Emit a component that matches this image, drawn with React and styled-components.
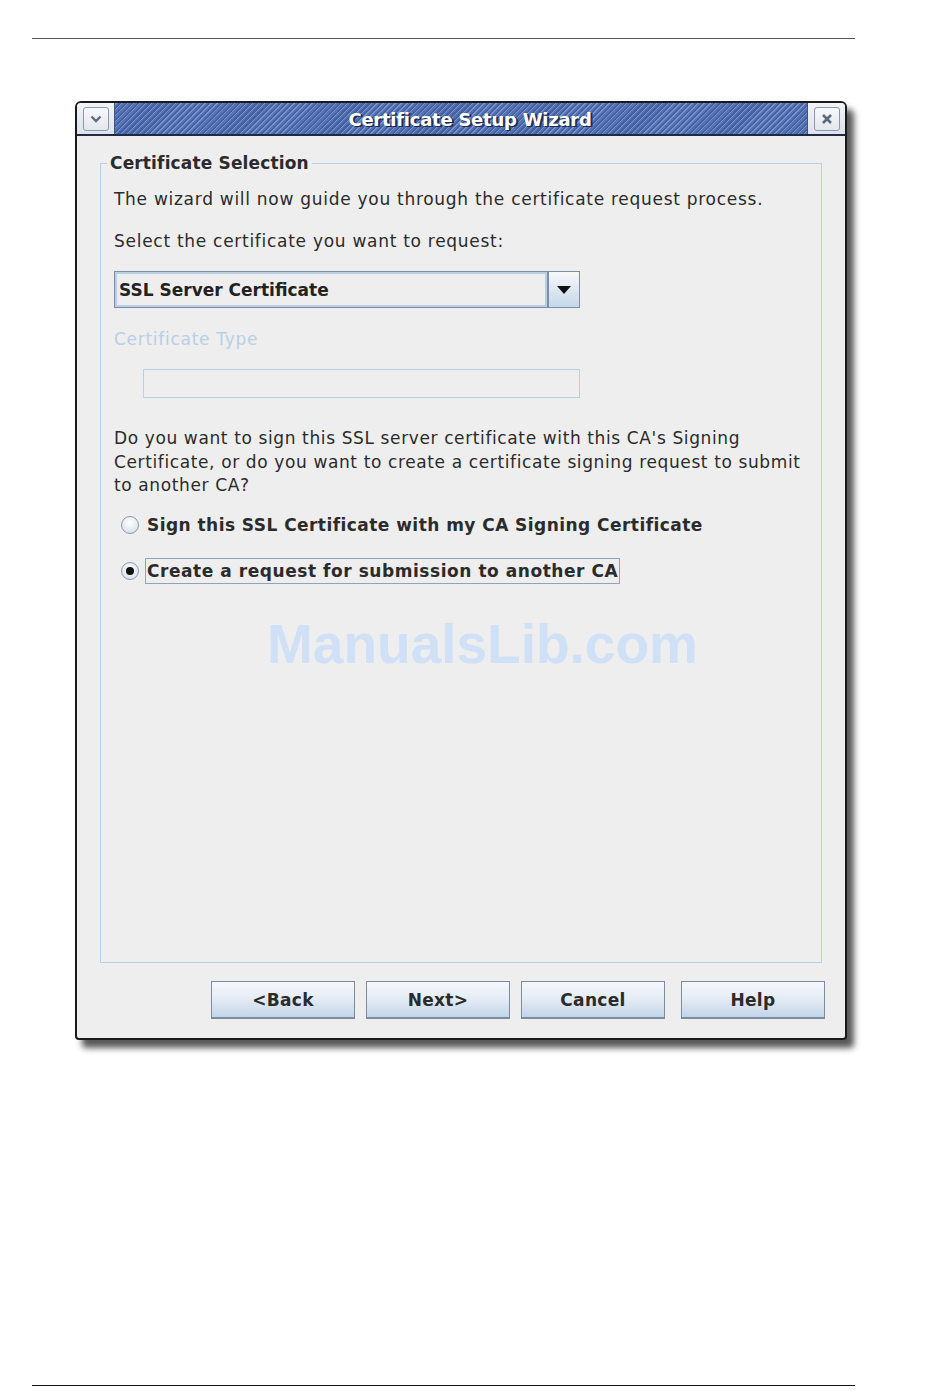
import React from "react";
import styled, { createGlobalStyle } from "styled-components";

const Global = createGlobalStyle`
  html, body {
    margin: 0;
    background: #ffffff;
  }
  body {
    font-family: "DejaVu Sans", "Liberation Sans", sans-serif;
  }
`;

const Page = styled.div`
  width: 823px;
  padding: 38px 0 0 32px;
  height: 1348px;
  display: flex;
  flex-direction: column;
`;

const Rule = styled.div`
  height: 0;
  border-top: 1px solid ${(p) => p.color || "#555"};
`;

const Window = styled.div`
  margin: 62px 0 0 43px;
  width: 772px;
  height: 939px;
  box-sizing: border-box;
  border: 2px solid #1a1a1a;
  border-radius: 6px 6px 4px 4px;
  background: #eeeeee;
  box-shadow: 7px 8px 6px rgba(0, 0, 0, 0.65);
  display: flex;
  flex-direction: column;
  overflow: hidden;
`;

const TitleBar = styled.div`
  height: 31px;
  flex-shrink: 0;
  display: flex;
  border-bottom: 2px solid #1f2a45;
`;

const TitleSide = styled.div`
  width: 37px;
  display: flex;
  align-items: center;
  justify-content: center;
  background: linear-gradient(#f1f3f7, #dde3ec);
  border-${(p) => (p.right ? "left" : "right")}: 1px solid #3d5488;
`;

const TitleButton = styled.div`
  width: 26px;
  height: 24px;
  box-sizing: border-box;
  border: 1px solid #8e97a8;
  border-radius: 3px;
  background: linear-gradient(#f7f8fb, #e3e7ee);
  display: flex;
  align-items: center;
  justify-content: center;
`;

const TitleStripes = styled.div`
  flex: 1;
  display: flex;
  align-items: center;
  justify-content: center;
  padding-left: 18px;
  background: repeating-linear-gradient(
    -45deg,
    #5473b4 0px,
    #5473b4 1.6px,
    #7792cc 1.6px,
    #7792cc 2.6px,
    #44609f 2.6px,
    #44609f 4.2px
  );
  color: #ffffff;
  font-weight: bold;
  font-size: 18px;
  letter-spacing: -0.25px;
  text-shadow: 1px 1px 0 #1f2c4d, 2px 1px 0 #1f2c4d;
  padding-top: 2px;
`;

const Body = styled.div`
  flex: 1;
  display: flex;
  flex-direction: column;
  padding: 27px 23px 20px 23px;
`;

const Group = styled.div`
  position: relative;
  height: 800px;
  flex-shrink: 0;
  box-sizing: border-box;
  border: 1px solid #b8cfe5;
  padding: 23px 10px 0 13px;
  display: flex;
  flex-direction: column;
`;

const Legend = styled.div`
  position: absolute;
  top: -12px;
  left: 6px;
  padding: 0 3px;
  background: #eeeeee;
  font-weight: bold;
  font-size: 17px;
  letter-spacing: 0.15px;
  line-height: 22px;
  color: #2b2b2b;
`;

const Text = styled.div`
  font-size: 17px;
  line-height: ${(p) => p.lh || 24}px;
  letter-spacing: ${(p) => p.ls ?? 0.72}px;
  white-space: nowrap;
  color: ${(p) => (p.disabled ? "#b9cfe6" : "#2b2b2b")};
  margin-top: ${(p) => p.mt || 0}px;
`;

const Combo = styled.div`
  margin-top: 18px;
  width: 466px;
  height: 37px;
  box-sizing: border-box;
  border: 1px solid #7d8ea6;
  display: flex;
`;

const ComboField = styled.div`
  flex: 1;
  border: 2px solid #b8cfe5;
  background: #eeeeee;
  display: flex;
  align-items: center;
  padding-left: 2px;
  font-weight: bold;
  font-size: 17px;
  letter-spacing: 0;
  color: #222;
`;

const ComboArrow = styled.div`
  width: 30px;
  border-left: 2px solid #7d8ea6;
  background: linear-gradient(#f6f8fb, #c6d7ea);
  display: flex;
  align-items: center;
  justify-content: center;
`;

const DisabledField = styled.div`
  margin: 18px 0 0 29px;
  width: 437px;
  height: 29px;
  box-sizing: border-box;
  border: 1px solid #b8cfe5;
`;

const RadioRow = styled.div`
  margin-top: ${(p) => p.mt}px;
  display: flex;
  align-items: center;
  gap: 6px;
  margin-left: 7px;
  height: 26px;
`;

const RadioDot = styled.div`
  width: 18px;
  height: 18px;
  box-sizing: border-box;
  border-radius: 50%;
  border: 1px solid #8a9bb3;
  background: radial-gradient(circle at 50% 35%, #ffffff, #d0dbe9);
  display: flex;
  align-items: center;
  justify-content: center;
  &::after {
    content: "";
    display: ${(p) => (p.checked ? "block" : "none")};
    width: 8px;
    height: 8px;
    border-radius: 50%;
    background: #111;
  }
`;

const RadioLabel = styled.div`
  font-weight: bold;
  font-size: 17px;
  letter-spacing: ${(p) => (p.focused ? 0.55 : 0.45)}px;
  color: #2b2b2b;
  line-height: 24px;
  padding: 0 1px;
  border: 1px solid ${(p) => (p.focused ? "#8ea3bd" : "transparent")};
`;

const Watermark = styled.div`
  margin-top: 30px;
  align-self: center;
  margin-left: 40px;
  font-family: "Liberation Sans", Arial, sans-serif;
  font-weight: bold;
  font-size: 55px;
  line-height: 60px;
  color: #cfe0f7;
`;

const ButtonRow = styled.div`
  margin: 18px -3px 0 0;
  display: flex;
  justify-content: flex-end;
  gap: 11px;
`;

const Button = styled.div`
  width: 144px;
  height: 38px;
  box-sizing: border-box;
  border: 1px solid #7b8ba2;
  border-bottom-width: 2px;
  background: linear-gradient(#f5f7fa, #e6edf5 45%, #c3d5ea);
  display: flex;
  align-items: center;
  justify-content: center;
  margin-left: ${(p) => p.extra || 0}px;
  font-weight: bold;
  font-size: 17px;
  letter-spacing: 0.3px;
  color: #2b2b2b;
`;

const Spacer = styled.div`
  flex: 1;
`;

export default function App() {
  return (
    <>
      <Global />
      <Page>
        <Rule color="#555" />
        <Window>
          <TitleBar>
            <TitleSide>
              <TitleButton>
                <svg width="12" height="8" viewBox="0 0 12 8">
                  <path d="M1.5 1.5 L6 6 L10.5 1.5" fill="none" stroke="#5d6a80" strokeWidth="2.4" />
                </svg>
              </TitleButton>
            </TitleSide>
            <TitleStripes>Certificate Setup Wizard</TitleStripes>
            <TitleSide right>
              <TitleButton>
                <svg width="12" height="12" viewBox="0 0 12 12">
                  <path d="M2 2 L10 10 M10 2 L2 10" fill="none" stroke="#5d6a80" strokeWidth="2.6" />
                </svg>
              </TitleButton>
            </TitleSide>
          </TitleBar>
          <Body>
            <Group>
              <Legend>Certificate Selection</Legend>
              <Text>The wizard will now guide you through the certificate request process.</Text>
              <Text mt={18}>Select the certificate you want to request:</Text>
              <Combo>
                <ComboField>SSL Server Certificate</ComboField>
                <ComboArrow>
                  <svg width="14" height="8" viewBox="0 0 14 8">
                    <path d="M0 0 H14 L7 8 Z" fill="#111" />
                  </svg>
                </ComboArrow>
              </Combo>
              <Text disabled mt={19}>Certificate Type</Text>
              <DisabledField />
              <Text mt={29} lh={23.5} ls={0.62}>
                Do you want to sign this SSL server certificate with this CA's Signing
                <br />
                Certificate, or do you want to create a certificate signing request to submit
                <br />
                to another CA?
              </Text>
              <RadioRow mt={14}>
                <RadioDot />
                <RadioLabel>Sign this SSL Certificate with my CA Signing Certificate</RadioLabel>
              </RadioRow>
              <RadioRow mt={20}>
                <RadioDot checked />
                <RadioLabel focused>Create a request for submission to another CA</RadioLabel>
              </RadioRow>
              <Watermark>ManualsLib.com</Watermark>
            </Group>
            <ButtonRow>
              <Button>&lt;Back</Button>
              <Button>Next&gt;</Button>
              <Button>Cancel</Button>
              <Button extra={5}>Help</Button>
            </ButtonRow>
          </Body>
        </Window>
        <Spacer />
        <Rule color="#111" />
      </Page>
    </>
  );
}
